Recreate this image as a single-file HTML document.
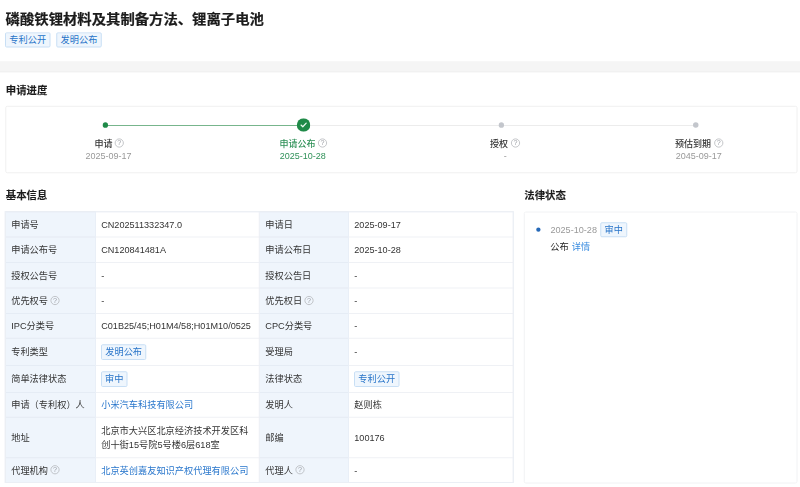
<!DOCTYPE html>
<html lang="zh-CN">
<head>
<meta charset="utf-8">
<title>专利详情</title>
<style>
html,body{margin:0;padding:0;background:#fff;overflow:hidden;}
body{width:800px;height:487px;position:relative;overflow:hidden;}
#w{position:absolute;left:0;top:0;width:3200px;height:1948px;transform:scale(0.25);transform-origin:0 0;font-family:"Liberation Sans", "Noto Sans CJK SC", sans-serif;color:#333;font-size:36.8px;}
.t{position:absolute;white-space:nowrap;line-height:56px;height:56px;}
.abs{position:absolute;}
.title{font-size:57.4px;font-weight:700;color:#1c1c1c;-webkit-text-stroke:1px #1c1c1c;line-height:80px;height:80px;}
.h2{font-size:41.6px;font-weight:700;color:#1c1c1c;-webkit-text-stroke:0.48px #1c1c1c;line-height:64px;height:64px;}
.tag{position:absolute;box-sizing:border-box;border:4px solid #c8dff5;background:#eff6fd;color:#2673c8;border-radius:6.4px;text-align:center;white-space:nowrap;font-size:36.8px;}
.box{position:absolute;box-sizing:border-box;border:4px solid #f0f0f0;background:#fff;}
.lab{position:absolute;background:#eff5fc;}
.hl{position:absolute;height:4px;background:#eff1f5;}
.vl{position:absolute;width:4px;background:#edf0f5;}
.q{position:absolute;width:36px;height:36px;box-sizing:border-box;border:3.6px solid #b2b4b8;border-radius:50%;color:#9a9da3;font-size:28.8px;line-height:29.6px;text-align:center;font-family:"Liberation Sans",sans-serif;}
.gray{color:#999;}
.s{font-size:36px;}
.lat{font-size:36.4px;}
.green{color:#2f9158;}
.link{color:#2876cc;}
</style>
</head>
<body>
<div id="w">

<div class="t title" style="left:22.4px;top:36.4px;transform:scaleY(0.92);transform-origin:0 50%;">磷酸铁锂材料及其制备方法、锂离子电池</div>
<div class="tag" style="left:20px;top:129.2px;width:182px;height:61.2px;line-height:53.2px;">专利公开</div>
<div class="tag" style="left:224.8px;top:129.2px;width:182px;height:61.2px;line-height:53.2px;">发明公布</div>
<div class="abs" style="left:0;top:245.2px;width:3200px;height:43.6px;background:#f5f5f5;"></div>
<div class="abs" style="left:0;top:284.8px;width:3200px;height:4px;background:#efefef;"></div>
<div class="t h2" style="left:23.2px;top:328px;">申请进度</div>
<div class="box" style="left:21.2px;top:423.2px;width:3168.8px;height:270px;border-radius:8px;"></div>
<div class="abs" style="left:421.6px;top:500px;width:792px;height:3.4px;background:#4a9c66;"></div>
<div class="abs" style="left:1212px;top:500px;width:1572px;height:3.4px;background:#e6e6e6;"></div>
<div class="abs" style="left:410.8px;top:489.2px;width:21.6px;height:21.6px;border-radius:50%;background:#1f8a48;"></div>
<div class="abs" style="left:1994.8px;top:489.2px;width:21.6px;height:21.6px;border-radius:50%;background:#c3c6cc;"></div>
<div class="abs" style="left:2772.4px;top:489.2px;width:21.6px;height:21.6px;border-radius:50%;background:#c3c6cc;"></div>
<svg class="abs" style="left:1186.8px;top:472.8px;width:54.4px;height:54.4px;" viewBox="0 0 20 20"><circle cx="10" cy="10" r="10" fill="#1f8a48"/><path d="M6.3 10.0 L8.9 12.5 L13.9 7.2" fill="none" stroke="#eefcf3" stroke-width="1.75" stroke-linecap="round" stroke-linejoin="round"/></svg>
<div class="t s" style="left:378.4px;top:546px;line-height:56px;height:56px;font-weight:500;">申请</div>
<div class="q" style="left:458.8px;top:553.6px;">?</div>
<div class="t s gray" style="left:342px;top:595.2px;line-height:56px;height:56px;">2025-09-17</div>
<div class="t s green" style="left:1118px;top:546px;line-height:56px;height:56px;font-weight:500;">申请公布</div>
<div class="q" style="left:1271.6px;top:553.6px;">?</div>
<div class="t s green" style="left:1118.8px;top:595.2px;line-height:56px;height:56px;">2025-10-28</div>
<div class="t s" style="left:1960px;top:546px;line-height:56px;height:56px;font-weight:500;">授权</div>
<div class="q" style="left:2043.6px;top:553.6px;">?</div>
<div class="t s gray" style="left:2015.2px;top:595.2px;line-height:56px;height:56px;">-</div>
<div class="t s" style="left:2700px;top:546px;line-height:56px;height:56px;font-weight:500;">预估到期</div>
<div class="q" style="left:2856.8px;top:553.6px;">?</div>
<div class="t s gray" style="left:2702.8px;top:595.2px;line-height:56px;height:56px;">2045-09-17</div>
<div class="t h2" style="left:23.2px;top:750.4px;">基本信息</div>
<div class="t h2" style="left:2097.2px;top:750.4px;">法律状态</div>
<div class="lab" style="left:20.8px;top:845.2px;width:362.2px;height:1084.8px;"></div>
<div class="lab" style="left:1036.8px;top:845.2px;width:357.6px;height:1084.8px;"></div>
<div class="hl" style="left:20.8px;top:845.2px;width:2032px;"></div>
<div class="hl" style="left:20.8px;top:845.2px;width:362.2px;background:#e5ecf5;"></div>
<div class="hl" style="left:1036.8px;top:845.2px;width:357.6px;background:#e5ecf5;"></div>
<div class="hl" style="left:20.8px;top:946px;width:2032px;"></div>
<div class="hl" style="left:20.8px;top:946px;width:362.2px;background:#e5ecf5;"></div>
<div class="hl" style="left:1036.8px;top:946px;width:357.6px;background:#e5ecf5;"></div>
<div class="hl" style="left:20.8px;top:1048px;width:2032px;"></div>
<div class="hl" style="left:20.8px;top:1048px;width:362.2px;background:#e5ecf5;"></div>
<div class="hl" style="left:1036.8px;top:1048px;width:357.6px;background:#e5ecf5;"></div>
<div class="hl" style="left:20.8px;top:1150.4px;width:2032px;"></div>
<div class="hl" style="left:20.8px;top:1150.4px;width:362.2px;background:#e5ecf5;"></div>
<div class="hl" style="left:1036.8px;top:1150.4px;width:357.6px;background:#e5ecf5;"></div>
<div class="hl" style="left:20.8px;top:1252px;width:2032px;"></div>
<div class="hl" style="left:20.8px;top:1252px;width:362.2px;background:#e5ecf5;"></div>
<div class="hl" style="left:1036.8px;top:1252px;width:357.6px;background:#e5ecf5;"></div>
<div class="hl" style="left:20.8px;top:1351.2px;width:2032px;"></div>
<div class="hl" style="left:20.8px;top:1351.2px;width:362.2px;background:#e5ecf5;"></div>
<div class="hl" style="left:1036.8px;top:1351.2px;width:357.6px;background:#e5ecf5;"></div>
<div class="hl" style="left:20.8px;top:1460px;width:2032px;"></div>
<div class="hl" style="left:20.8px;top:1460px;width:362.2px;background:#e5ecf5;"></div>
<div class="hl" style="left:1036.8px;top:1460px;width:357.6px;background:#e5ecf5;"></div>
<div class="hl" style="left:20.8px;top:1567.6px;width:2032px;"></div>
<div class="hl" style="left:20.8px;top:1567.6px;width:362.2px;background:#e5ecf5;"></div>
<div class="hl" style="left:1036.8px;top:1567.6px;width:357.6px;background:#e5ecf5;"></div>
<div class="hl" style="left:20.8px;top:1667.2px;width:2032px;"></div>
<div class="hl" style="left:20.8px;top:1667.2px;width:362.2px;background:#e5ecf5;"></div>
<div class="hl" style="left:1036.8px;top:1667.2px;width:357.6px;background:#e5ecf5;"></div>
<div class="hl" style="left:20.8px;top:1828.8px;width:2032px;"></div>
<div class="hl" style="left:20.8px;top:1828.8px;width:362.2px;background:#e5ecf5;"></div>
<div class="hl" style="left:1036.8px;top:1828.8px;width:357.6px;background:#e5ecf5;"></div>
<div class="hl" style="left:20.8px;top:1928px;width:2032px;"></div>
<div class="hl" style="left:20.8px;top:1928px;width:362.2px;background:#e5ecf5;"></div>
<div class="hl" style="left:1036.8px;top:1928px;width:357.6px;background:#e5ecf5;"></div>
<div class="vl" style="left:18.8px;top:845.2px;height:1086.8px;"></div>
<div class="vl" style="left:1034.8px;top:845.2px;height:1086.8px;"></div>
<div class="vl" style="left:2050.8px;top:845.2px;height:1086.8px;"></div>
<div class="vl" style="left:380.2px;top:845.2px;height:1086.8px;background:#e9eff7;"></div>
<div class="vl" style="left:1391.6px;top:845.2px;height:1086.8px;background:#e9eff7;"></div>
<div class="abs" style="left:18.8px;top:845.2px;width:2036px;height:1086.8px;box-sizing:border-box;border:4px solid #ebeff5;"></div>
<div class="t " style="left:44.8px;top:870.8px;line-height:56px;height:56px;">申请号</div>
<div class="t " style="left:1061.2px;top:870.8px;line-height:56px;height:56px;">申请日</div>
<div class="t lat" style="left:404.8px;top:870.8px;line-height:56px;height:56px;">CN202511332347.0</div>
<div class="t lat" style="left:1417.2px;top:870.8px;line-height:56px;height:56px;">2025-09-17</div>
<div class="t " style="left:44.8px;top:972.2px;line-height:56px;height:56px;">申请公布号</div>
<div class="t " style="left:1061.2px;top:972.2px;line-height:56px;height:56px;">申请公布日</div>
<div class="t lat" style="left:404.8px;top:972.2px;line-height:56px;height:56px;">CN120841481A</div>
<div class="t lat" style="left:1417.2px;top:972.2px;line-height:56px;height:56px;">2025-10-28</div>
<div class="t " style="left:44.8px;top:1074.4px;line-height:56px;height:56px;">授权公告号</div>
<div class="t " style="left:1061.2px;top:1074.4px;line-height:56px;height:56px;">授权公告日</div>
<div class="t " style="left:404.8px;top:1074.4px;line-height:56px;height:56px;">-</div>
<div class="t " style="left:1417.2px;top:1074.4px;line-height:56px;height:56px;">-</div>
<div class="t " style="left:44.8px;top:1176.4px;line-height:56px;height:56px;">优先权号</div>
<div class="q" style="left:202px;top:1184px;">?</div>
<div class="t " style="left:1061.2px;top:1176.4px;line-height:56px;height:56px;">优先权日</div>
<div class="q" style="left:1218.4px;top:1184px;">?</div>
<div class="t " style="left:404.8px;top:1176.4px;line-height:56px;height:56px;">-</div>
<div class="t " style="left:1417.2px;top:1176.4px;line-height:56px;height:56px;">-</div>
<div class="t " style="left:44.8px;top:1276.8px;line-height:56px;height:56px;">IPC分类号</div>
<div class="t " style="left:1061.2px;top:1276.8px;line-height:56px;height:56px;">CPC分类号</div>
<div class="t lat" style="left:404.8px;top:1276.8px;line-height:56px;height:56px;">C01B25/45;H01M4/58;H01M10/0525</div>
<div class="t " style="left:1417.2px;top:1276.8px;line-height:56px;height:56px;">-</div>
<div class="t " style="left:44.8px;top:1380.8px;line-height:56px;height:56px;">专利类型</div>
<div class="t " style="left:1061.2px;top:1380.8px;line-height:56px;height:56px;">受理局</div>
<div class="tag" style="left:404px;top:1377.2px;width:181.2px;height:62.4px;line-height:54.4px;">发明公布</div>
<div class="t " style="left:1417.2px;top:1380.8px;line-height:56px;height:56px;">-</div>
<div class="t " style="left:44.8px;top:1489px;line-height:56px;height:56px;">简单法律状态</div>
<div class="t " style="left:1061.2px;top:1489px;line-height:56px;height:56px;">法律状态</div>
<div class="tag" style="left:404px;top:1485.4px;width:106.4px;height:62.4px;line-height:54.4px;">审中</div>
<div class="tag" style="left:1416.4px;top:1485.4px;width:181.2px;height:62.4px;line-height:54.4px;">专利公开</div>
<div class="t " style="left:44.8px;top:1592.6px;line-height:56px;height:56px;">申请（专利权）人</div>
<div class="t " style="left:1061.2px;top:1592.6px;line-height:56px;height:56px;">发明人</div>
<div class="t link" style="left:404.8px;top:1592.6px;line-height:56px;height:56px;">小米汽车科技有限公司</div>
<div class="t " style="left:1417.2px;top:1592.6px;line-height:56px;height:56px;">赵则栋</div>
<div class="t " style="left:44.8px;top:1723.2px;line-height:56px;height:56px;">地址</div>
<div class="t " style="left:1061.2px;top:1723.2px;line-height:56px;height:56px;">邮编</div>
<div class="t " style="left:404.8px;top:1695.2px;line-height:56px;height:56px;">北京市大兴区北京经济技术开发区科</div>
<div class="t " style="left:404.8px;top:1751.2px;line-height:56px;height:56px;">创十街15号院5号楼6层618室</div>
<div class="t lat" style="left:1417.2px;top:1723.2px;line-height:56px;height:56px;">100176</div>
<div class="t " style="left:44.8px;top:1853.6px;line-height:56px;height:56px;">代理机构</div>
<div class="q" style="left:202px;top:1861.2px;">?</div>
<div class="t " style="left:1061.2px;top:1853.6px;line-height:56px;height:56px;">代理人</div>
<div class="q" style="left:1181.6px;top:1861.2px;">?</div>
<div class="t link" style="left:404.8px;top:1853.6px;line-height:56px;height:56px;">北京英创嘉友知识产权代理有限公司</div>
<div class="t " style="left:1417.2px;top:1853.6px;line-height:56px;height:56px;">-</div>
<div class="box" style="left:2095.2px;top:845.6px;width:1094.8px;height:1088.8px;border-color:#f1f2f4;border-radius:8px;"></div>
<div class="abs" style="left:2145.2px;top:910.4px;width:16.8px;height:16.8px;border-radius:50%;background:#2669b8;"></div>
<div class="t lat gray" style="left:2201.6px;top:891.2px;line-height:56px;height:56px;">2025-10-28</div>
<div class="tag" style="left:2400.8px;top:888.8px;width:108px;height:60.4px;line-height:52.4px;">审中</div>
<div class="t " style="left:2201.2px;top:960px;line-height:56px;height:56px;color:#222;">公布</div>
<div class="t link" style="left:2287.2px;top:960px;line-height:56px;height:56px;color:#3b8de0;">详情</div>
</div>
</body>
</html>
